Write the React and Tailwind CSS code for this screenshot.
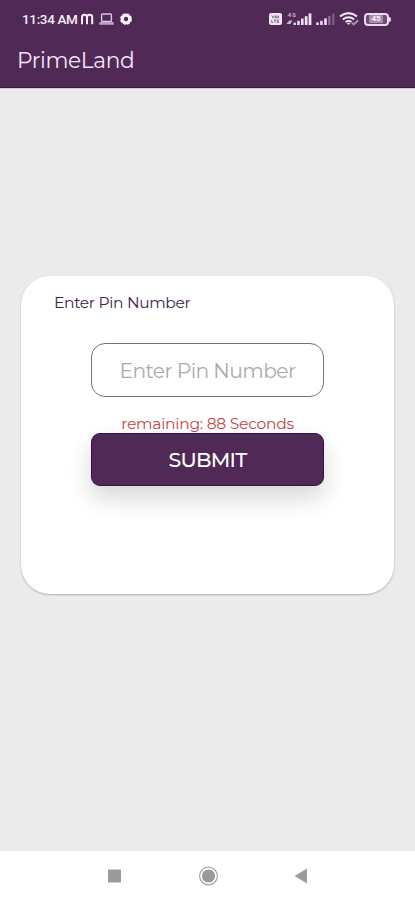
import React, { useState } from 'react'

const LaptopIcon = () => (
  <svg width="15" height="12" viewBox="0 0 15 12" className="ml-[5px]">
    <rect x="2.6" y="1" width="9.8" height="7.4" rx="0.8" fill="none" stroke="#d9cadd" strokeWidth="1.4" />
    <rect x="0.3" y="9" width="14.4" height="2.8" rx="0.6" fill="#b9a3bf" />
  </svg>
)

const GearIcon = () => (
  <svg width="12" height="12" viewBox="0 0 12 12" className="ml-[6px]">
    <circle cx="6" cy="6" r="3.7" fill="none" stroke="#fbf3fd" strokeWidth="3" />
    <circle cx="6" cy="6" r="5.2" fill="none" stroke="#fbf3fd" strokeWidth="1.4" strokeDasharray="2.9 1.18" />
  </svg>
)

const VolteIcon = () => (
  <svg width="13" height="12" viewBox="0 0 13 12">
    <rect width="13" height="12" rx="2" fill="#f1e6f4" />
    <path d="M3 2.6l1.2 2.6 1.2-2.6M6.5 3h1.6v2H6.5zM9.6 2.6v2.6M2.8 6.8v2.8h1.4M5 7h2M6 7v2.6M10 7H8.2v2.5H10M8.2 8.2h1.6" fill="none" stroke="#7c6084" strokeWidth="0.9" />
  </svg>
)

const MainSignal = () => (
  <svg width="26" height="14" viewBox="0 0 26 14" className="ml-1">
    <path d="M4.3 0.8L2.3 3.6h3M4.3 0.8v4.2M9.3 1.5H7.2v3h2V3.2h-1" fill="none" stroke="#a78dae" strokeWidth="1.2" />
    <path d="M0.4 12l3-3.4h3L4.4 12z" fill="#cab8cf" />
    <rect x="7.6" y="10.6" width="2.2" height="2.4" fill="#efe3f2" />
    <rect x="11.2" y="8.8" width="2.5" height="4.2" fill="#efe3f2" />
    <rect x="15" y="6.6" width="2.6" height="6.4" fill="#efe3f2" />
    <rect x="18.8" y="4.2" width="2.7" height="8.8" fill="#efe3f2" />
    <rect x="22.6" y="1.4" width="2.8" height="11.6" fill="#efe3f2" />
  </svg>
)

const SecondSignal = () => (
  <svg width="19" height="14" viewBox="0 0 19 14" className="ml-[4px]">
    <rect x="0.2" y="10.4" width="2.5" height="2.6" fill="#efe3f2" />
    <rect x="4.2" y="8.8" width="2.5" height="4.2" fill="#efe3f2" />
    <rect x="8.2" y="6.4" width="2.6" height="6.6" fill="#efe3f2" />
    <rect x="12.2" y="3.8" width="2.3" height="9.2" fill="#8c6c94" />
    <rect x="16.2" y="1.4" width="2.3" height="11.6" fill="#7c5b85" />
  </svg>
)

const WifiIcon = () => (
  <svg width="21" height="14" viewBox="0 0 21 14" className="ml-[4px]">
    <path d="M1 4.4Q9.5-2.2 18 4.4M3.8 7.4q5.7-4.4 11.4 0M6.5 10q3-2.2 6 0" fill="none" stroke="#f1e6f4" strokeWidth="2" />
    <path d="M7.8 11h3.4l-1.7 2z" fill="#f1e6f4" />
    <path d="M12.8 10.8l2 1.7 4.4-4.2" fill="none" stroke="#a78dae" strokeWidth="2" />
  </svg>
)

const BatteryIcon = () => (
  <div className="ml-[4px] flex items-center">
    <div className="flex h-[13px] w-[25px] items-center justify-center rounded-[4px] border-2 border-[#eadcee] bg-[#6d4b76] pr-px">
      <span className="rounded-[1px] bg-[#a78dae] px-[2px] text-[8px] leading-[8px] font-bold text-[#fbf3fd]">45</span>
    </div>
    <div className="h-[5px] w-[2px] rounded-r-sm bg-[#eadcee]" />
  </div>
)

const StatusBar = () => (
  <div className="flex h-[38px] items-center justify-between pr-[24px] pl-[22px] font-[Roboto,sans-serif]">
    <div className="flex items-center">
      <span className="w-[56px] text-[13.5px] leading-4 font-medium tracking-[-0.35px] whitespace-nowrap text-[#f6edf8]">11:34 AM</span>
      <svg width="14" height="12" viewBox="0 0 14 12" className="ml-[2px]">
        <path d="M2 11.3V4.2Q2 1.7 4.4 1.7T7 4.2v7.1M7 4.2q0-2.5 2.6-2.5T12.2 4.2v7.1" fill="none" stroke="#f6edf8" strokeWidth="2" />
      </svg>
      <LaptopIcon />
      <GearIcon />
    </div>
    <div className="flex items-center">
      <VolteIcon />
      <MainSignal />
      <SecondSignal />
      <WifiIcon />
      <BatteryIcon />
    </div>
  </div>
)

const Header = () => (
  <header className="h-[89px] border-b border-[#d5c9d8] bg-[#502957] shadow-[inset_0_-1px_0_#431347]">
    <StatusBar />
    <h1 className="pl-[17px] font-[Montserrat,sans-serif] text-[21.7px] leading-[44px] tracking-[-0.35px] text-[#f3e6f5]">
      PrimeLand
    </h1>
  </header>
)

const PinCard = ({ remaining }) => {
  const [pin, setPin] = useState('')

  return (
    <section className="mx-[21px] mt-[187px] h-[318px] rounded-[29px] bg-white pt-[17px] font-[Montserrat,sans-serif] shadow-[0_1px_2px_rgba(0,0,0,0.25)]">
      <p className="pl-[33px] text-[15.5px] leading-5 tracking-[-0.34px] text-[#40244a]">Enter Pin Number</p>
      <div className="mr-[70px] ml-[70px] flex flex-col">
        <input
          type="text"
          value={pin}
          onChange={(e) => setPin(e.target.value)}
          placeholder="Enter Pin Number"
          className="mt-[30px] h-[54px] rounded-[14px] border border-[#77717b] bg-white pt-px text-center text-[20.3px] tracking-[-0.6px] text-[#40244a] outline-none placeholder:text-[#ababab]"
        />
        <p className="mt-[17px] h-[19px] text-center text-[15.5px] leading-[19px] tracking-[-0.25px] whitespace-nowrap text-[#c2484c]">
          remaining: {remaining} Seconds
        </p>
        <button
          type="button"
          className="h-[53px] rounded-[9px] border border-[#37104a] bg-[#502957] pt-px text-[20.5px] font-medium tracking-[-0.75px] text-white shadow-[0_12px_24px_rgba(0,0,0,0.16)]"
        >
          SUBMIT
        </button>
      </div>
    </section>
  )
}

const NavBar = () => (
  <nav className="mt-auto flex h-[49px] items-center justify-center bg-white">
    <svg width="200" height="22" viewBox="0 0 200 22">
      <rect x="0" y="4.5" width="13" height="13" fill="#9b9b9b" />
      <circle cx="100.5" cy="11" r="8.9" fill="none" stroke="#a3a3a3" strokeWidth="1.2" />
      <circle cx="100.5" cy="11" r="6.6" fill="#9b9b9b" />
      <path d="M186.5 11L199 3.5v15z" fill="#9b9b9b" />
    </svg>
  </nav>
)

const App = () => (
  <div className="flex h-[900px] w-[415px] flex-col overflow-hidden bg-[#ebebeb]">
    <Header />
    <PinCard remaining={88} />
    <NavBar />
  </div>
)

export default App
